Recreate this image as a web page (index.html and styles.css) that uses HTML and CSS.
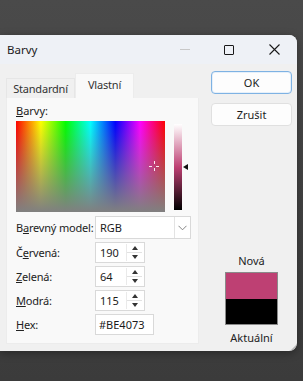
FILE: index.html
```html
<!DOCTYPE html>
<html lang="cs">
<head>
    <meta charset="UTF-8">
    <meta name="viewport" content="width=device-width, initial-scale=1.0">
    <title>Barvy</title>
    <link rel="stylesheet" href="styles.css">
</head>
<body>
    <div class="dialog">
        <div class="titlebar">
            <span class="title">Barvy</span>
            <div class="caption-buttons">
                <span class="cap cap-min"></span>
                <span class="cap cap-max"></span>
                <svg class="cap cap-close" width="11" height="11" viewBox="0 0 11 11">
                    <path d="M0.5 0.5 L10.5 10.5 M10.5 0.5 L0.5 10.5" stroke="#1a1a1a" stroke-width="1.1" fill="none"/>
                </svg>
            </div>
        </div>

        <div class="content">
            <div class="left-col">
                <div class="tabs">
                    <div class="tab">Standardní</div>
                    <div class="tab active">Vlastní</div>
                </div>
                <div class="panel">
                    <div class="label"><u>B</u>arvy:</div>
                    <div class="picker">
                        <div class="spectrum">
                            <span class="cross c-top"></span>
                            <span class="cross c-bottom"></span>
                            <span class="cross c-left"></span>
                            <span class="cross c-right"></span>
                        </div>
                        <div class="lum"></div>
                        <span class="lum-arrow"></span>
                    </div>

                    <div class="row">
                        <span class="row-label">B<u>a</u>revný model:</span>
                        <div class="combo">
                            <span class="combo-text">RGB</span>
                            <span class="combo-btn">
                                <svg width="9" height="6" viewBox="0 0 9 6"><path d="M0.5 0.8 L4.5 4.8 L8.5 0.8" stroke="#777" stroke-width="0.9" fill="none"/></svg>
                            </span>
                        </div>
                    </div>
                    <div class="row">
                        <span class="row-label">Č<u>e</u>rvená:</span>
                        <div class="spin"><span class="spin-text">190</span><span class="spin-btns"><i class="up"></i><i class="down"></i></span></div>
                    </div>
                    <div class="row">
                        <span class="row-label"><u>Z</u>elená:</span>
                        <div class="spin"><span class="spin-text">64</span><span class="spin-btns"><i class="up"></i><i class="down"></i></span></div>
                    </div>
                    <div class="row">
                        <span class="row-label"><u>M</u>odrá:</span>
                        <div class="spin"><span class="spin-text">115</span><span class="spin-btns"><i class="up"></i><i class="down"></i></span></div>
                    </div>
                    <div class="row">
                        <span class="row-label"><u>H</u>ex:</span>
                        <div class="hex">#BE4073</div>
                    </div>
                </div>
            </div>

            <div class="right-col">
                <button class="btn btn-default">OK</button>
                <button class="btn">Zrušit</button>
                <div class="preview">
                    <div class="preview-label">Nová</div>
                    <div class="swatch">
                        <div class="swatch-new"></div>
                        <div class="swatch-old"></div>
                    </div>
                    <div class="preview-label">Aktuální</div>
                </div>
            </div>
        </div>
        <span class="grip"></span>
    </div>
</body>
</html>
```

FILE: styles.css
```css
body, html {
    height: 100%;
    margin: 0;
}

body {
    background: linear-gradient(to bottom, #4a4a4a, #3b3b3b);
    font-family: "Noto Sans", "Open Sans", sans-serif;
    font-size: 11px;
    color: #1b1b1b;
    padding-top: 35px;
    box-sizing: border-box;
}

.dialog {
    position: relative;
    width: 297px;
    height: 316px;
    background: #f0f0f0;
    border-radius: 0 8px 8px 0;
    overflow: hidden;
    display: flex;
    flex-direction: column;
    box-shadow: 0 2px 8px rgba(0,0,0,0.35);
}

.titlebar {
    height: 29px;
    background: #eef1f6;
    display: flex;
    align-items: center;
    justify-content: space-between;
    padding-left: 7px;
    flex-shrink: 0;
}

.title {
    font-size: 11.5px;
}

.caption-buttons {
    display: flex;
    align-items: center;
    height: 100%;
}

.cap {
    display: block;
}

.cap-min {
    width: 10px;
    height: 1px;
    background: #c8c8c8;
    margin-right: 34px;
}

.cap-max {
    width: 8px;
    height: 8px;
    border: 1px solid #1a1a1a;
    border-radius: 1px;
    margin-right: 35px;
}

.cap-close {
    margin-right: 17px;
}

.content {
    flex: 1;
    display: flex;
    padding: 7px 5px 5px 6px;
    gap: 12px;
}

.left-col {
    display: flex;
    flex-direction: column;
    width: 193px;
}

.tabs {
    display: flex;
    align-items: flex-end;
    height: 26px;
    margin-top: 1px;
}

.tab {
    height: 20px;
    width: 69px;
    box-sizing: border-box;
    display: flex;
    align-items: center;
    justify-content: center;
    color: #333;
    letter-spacing: -0.2px;
    white-space: nowrap;
    border: 1px solid #e6e6e6;
    border-bottom: none;
    background: #f0f0f0;
}

.tab.active {
    height: 25px;
    width: 59px;
    background: #f9f9f9;
    border-color: #ececec;
    padding-bottom: 3px;
}

.panel {
    height: 246px;
    box-sizing: border-box;
    background: #f9f9f9;
    border: 1px solid #ececec;
    border-top: none;
    padding: 5px 0 0 9px;
}

.label {
    height: 16px;
    line-height: 16px;
}

.picker {
    position: relative;
    display: flex;
    margin-top: 2px;
    height: 94px;
}

.spectrum {
    position: relative;
    width: 149px;
    height: 91px;
    background:
        linear-gradient(to bottom, rgba(128,128,128,0), #808080),
        linear-gradient(to right, #ff0000, #ffff00, #00ff00, #00ffff, #0000ff, #ff00ff, #ff0000);
}

.cross {
    position: absolute;
    background: #fbe9f1;
}

.c-top, .c-bottom {
    width: 1px;
    height: 3px;
    left: 138px;
}

.c-top { top: 40px; }
.c-bottom { top: 47px; }

.c-left, .c-right {
    width: 3px;
    height: 1px;
    top: 45px;
}

.c-left { left: 133px; }
.c-right { left: 140px; }

.lum {
    width: 8px;
    height: 86px;
    margin: 3px 0 0 9px;
    background: linear-gradient(to bottom, #ffffff, #be4073 50%, #000000);
}

.lum-arrow {
    position: absolute;
    left: 167px;
    top: 43px;
    width: 0;
    height: 0;
    border-top: 3px solid transparent;
    border-bottom: 3px solid transparent;
    border-right: 5px solid #111;
}

.row {
    display: flex;
    align-items: center;
    margin-top: 3px;
    min-height: 21px;
}

.picker + .row {
    margin-top: 1px;
}

.row-label {
    width: 79px;
    white-space: nowrap;
    letter-spacing: -0.2px;
    color: #222;
}

.combo, .spin, .hex {
    box-sizing: border-box;
    background: #fff;
    border: 1px solid #d9d9d9;
    display: flex;
    align-items: center;
}

.combo {
    width: 96px;
    height: 23px;
}

.combo-text {
    flex: 1;
    padding-left: 4px;
}

.combo-btn {
    width: 15px;
    height: 100%;
    border-left: 1px solid #e3e3e3;
    display: flex;
    align-items: center;
    justify-content: center;
}

.spin {
    width: 50px;
    height: 21px;
}

.spin-text {
    flex: 1;
    padding-left: 4px;
}

.spin-btns {
    width: 15px;
    height: 17px;
    margin-right: 2px;
    display: flex;
    flex-direction: column;
    border-left: 1px solid #eaeaea;
}

.spin-btns i {
    flex: 1;
    display: flex;
    align-items: center;
    justify-content: center;
}

.spin-btns i.up {
    border-bottom: 1px solid #e2e2e2;
}

.spin-btns i.up::after {
    content: "";
    border-left: 3px solid transparent;
    border-right: 3px solid transparent;
    border-bottom: 4px solid #333;
}

.spin-btns i.down::after {
    content: "";
    border-left: 3px solid transparent;
    border-right: 3px solid transparent;
    border-top: 4px solid #333;
}

.hex {
    width: 59px;
    height: 21px;
    padding-left: 3px;
}

.right-col {
    width: 81px;
    display: flex;
    flex-direction: column;
}

.btn {
    font-family: inherit;
    font-size: 11px;
    color: #1b1b1b;
    height: 23px;
    background: #fdfdfd;
    border: 1px solid #e0e0e0;
    border-radius: 4px;
    padding: 0;
    margin-bottom: 9px;
}

.btn-default {
    border: 1px solid #7eb2e3;
    box-shadow: inset 0 0 0 1px #e6f0fa;
}

.preview {
    margin-top: auto;
    display: flex;
    flex-direction: column;
    align-items: center;
}

.preview-label {
    height: 16px;
    line-height: 16px;
    color: #222;
}

.swatch {
    width: 53px;
    height: 53px;
    box-sizing: border-box;
    border: 1px solid #8a8a8a;
    margin: 3px 0 5px;
    display: flex;
    flex-direction: column;
}

.swatch-new {
    flex: 1;
    background: #be4073;
}

.swatch-old {
    flex: 1;
    background: #000;
}

.grip {
    position: absolute;
    right: 1px;
    bottom: 1px;
    width: 0;
    height: 0;
    border-left: 5px solid transparent;
    border-bottom: 5px solid #b5b5b5;
}
```
